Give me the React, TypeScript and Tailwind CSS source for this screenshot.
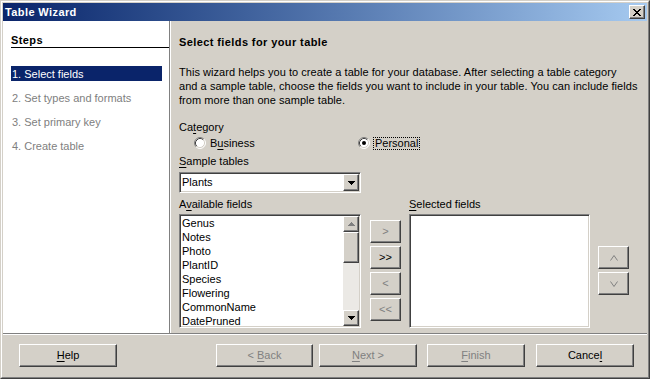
import React from 'react';

const raised =
  'bg-[#d4d0c8] border border-t-white border-l-white border-r-[#404040] border-b-[#404040] shadow-[inset_-1px_-1px_#808080]';
const sunken =
  'border border-t-[#808080] border-l-[#808080] border-r-white border-b-white shadow-[inset_1px_1px_#404040,inset_-1px_-1px_#d4d0c8]';

function U({ children }: { children: React.ReactNode }) {
  return <span className="underline underline-offset-[2px]">{children}</span>;
}

function Radio({ checked }: { checked?: boolean }) {
  return (
    <svg width="12" height="12" viewBox="0 0 12 12" className="shrink-0">
      <circle cx="6" cy="6" r="5" fill="#fff" />
      <path d="M2.11 9.89 A5.5 5.5 0 0 1 9.89 2.11" fill="none" stroke="#808080" />
      <path d="M2.82 9.18 A4.5 4.5 0 0 1 9.18 2.82" fill="none" stroke="#404040" />
      <path d="M9.89 2.11 A5.5 5.5 0 0 1 2.11 9.89" fill="none" stroke="#fff" />
      <path d="M9.18 2.82 A4.5 4.5 0 0 1 2.82 9.18" fill="none" stroke="#d4d0c8" />
      {checked && <circle cx="6" cy="6" r="2" fill="#000" />}
    </svg>
  );
}

function Tri({ up, color = '#000' }: { up?: boolean; color?: string }) {
  return (
    <svg width="7" height="4" viewBox="0 0 7 4" shapeRendering="crispEdges">
      {up ? (
        <>
          <rect x="3" y="0" width="1" height="1" fill={color} />
          <rect x="2" y="1" width="3" height="1" fill={color} />
          <rect x="1" y="2" width="5" height="1" fill={color} />
          <rect x="0" y="3" width="7" height="1" fill={color} />
        </>
      ) : (
        <>
          <rect x="0" y="0" width="7" height="1" fill={color} />
          <rect x="1" y="1" width="5" height="1" fill={color} />
          <rect x="2" y="2" width="3" height="1" fill={color} />
          <rect x="3" y="3" width="1" height="1" fill={color} />
        </>
      )}
    </svg>
  );
}

function Chevron({ up }: { up?: boolean }) {
  return (
    <svg width="8" height="6" viewBox="0 0 8 6">
      <polyline
        points={up ? '0.5,5.5 4,0.5 7.5,5.5' : '0.5,0.5 4,5.5 7.5,0.5'}
        fill="none"
        stroke="#808080"
        strokeWidth="1"
      />
    </svg>
  );
}

const fields = ['Genus', 'Notes', 'Photo', 'PlantID', 'Species', 'Flowering', 'CommonName', 'DatePruned'];
const steps = ['1. Select fields', '2. Set types and formats', '3. Set primary key', '4. Create table'];

function SmallBtn({ children, disabled }: { children: React.ReactNode; disabled?: boolean }) {
  return (
    <div
      className={`${raised} w-[31px] h-[23px] flex items-center justify-center leading-none ${
        disabled ? 'text-[#808080]' : 'text-black'
      }`}
    >
      {children}
    </div>
  );
}

function FooterBtn({
  children,
  disabled,
  className = '',
}: {
  children: React.ReactNode;
  disabled?: boolean;
  className?: string;
}) {
  return (
    <div
      className={`${raised} h-[23px] flex items-center justify-center ${
        disabled ? 'text-[#808080]' : 'text-black'
      } ${className}`}
    >
      <span className="whitespace-pre">{children}</span>
    </div>
  );
}

export default function App() {
  return (
    <div className="w-[650px] h-[379px] bg-[#d4d0c8] border border-t-[#d4d0c8] border-l-[#d4d0c8] border-r-[#404040] border-b-[#404040] font-['Liberation_Sans',Arial,sans-serif] text-[11px] text-black overflow-hidden">
      <div className="h-full border border-t-white border-l-white border-r-[#808080] border-b-[#808080] p-[1px] flex flex-col">
        {/* title bar */}
        <div className="h-[18px] shrink-0 flex items-center bg-gradient-to-r from-[#0a246a] to-[#a6caf0] pl-[2px] pr-[2px]">
          <span className="text-white font-bold leading-[18px] tracking-[0.4px]">Table Wizard</span>
          <div className={`${raised} ml-auto w-[16px] h-[14px] flex items-center justify-center`}>
            <svg width="8" height="7" viewBox="0 0 8 7" shapeRendering="crispEdges">
              <path d="M0 0h2v1h-2zM6 0h2v1h-2zM1 1h2v1h-2zM5 1h2v1h-2zM2 2h4v1h-4zM3 3h2v1h-2zM2 4h4v1h-4zM1 5h2v1h-2zM5 5h2v1h-2zM0 6h2v1h-2zM6 6h2v1h-2z" fill="#000" />
            </svg>
          </div>
        </div>

        {/* body */}
        <div className="h-[312px] shrink-0 flex">
          <div className="w-[166px] bg-white pl-[8px]">
            <div className="mt-[13px] h-[14px] leading-[13px] border-b border-black font-bold tracking-[0.4px]">
              Steps
            </div>
            <div className="mt-[18px] flex flex-col gap-[9px]">
              {steps.map((s, i) => (
                <div
                  key={s}
                  className={`w-[151px] h-[15px] pt-[1px] pl-[1px] leading-[14px] whitespace-nowrap ${
                    i === 0 ? 'bg-[#0a246a] text-white' : 'text-[#808080]'
                  }`}
                >
                  {s}
                </div>
              ))}
            </div>
          </div>
          <div className="w-[1px] bg-[#808080]" />
          <div className="w-[1px] bg-white" />

          <div className="flex-1 pl-[8px] flex flex-col">
            <div className="mt-[14px] leading-[14px] font-bold tracking-[0.4px]">Select fields for your table</div>
            <div className="mt-[16px] leading-[14px] whitespace-nowrap tracking-[0.05px]">
              This wizard helps you to create a table for your database. After selecting a table category
              <br />
              and a sample table, choose the fields you want to include in your table. You can include fields
              <br />
              from more than one sample table.
            </div>

            <div className="mt-[13px] leading-[14px]">
              Ca<U>t</U>egory
            </div>
            <div className="mt-[2px] h-[14px] flex items-center leading-[14px]">
              <div className="ml-[15px] w-[164px] flex items-center">
                <Radio />
                <span className="ml-[4px]">
                  B<U>u</U>siness
                </span>
              </div>
              <Radio checked />
              <span className="ml-[3px] px-[1px] border border-dotted border-black leading-[11px] h-[13px]">
                Personal
              </span>
            </div>

            <div className="mt-[4px] leading-[14px]">
              <U>S</U>ample tables
            </div>
            <div className={`${sunken} mt-[4px] w-[182px] h-[21px] bg-white p-[1px] flex`}>
              <div className="flex-1 pl-[1px] leading-[17px]">Plants</div>
              <div className={`${raised} w-[16px] h-[17px] flex items-center justify-center`}>
                <Tri />
              </div>
            </div>

            <div className="mt-[4px] flex">
              <div className="w-[182px]">
                <div className="leading-[14px]">
                  A<U>v</U>ailable fields
                </div>
                <div className={`${sunken} mt-[3px] h-[114px] bg-white p-[1px] flex`}>
                  <div className="flex-1 pl-[1px] overflow-hidden">
                    {fields.map((f) => (
                      <div key={f} className="h-[14px] leading-[14px]">
                        {f}
                      </div>
                    ))}
                  </div>
                  <div className="w-[16px] flex flex-col bg-[#ebe9e5]">
                    <div className={`${raised} h-[16px] flex items-center justify-center`}>
                      <Tri up color="#808080" />
                    </div>
                    <div className={`${raised} h-[31px]`} />
                    <div className="flex-1" />
                    <div className={`${raised} h-[16px] flex items-center justify-center`}>
                      <Tri />
                    </div>
                  </div>
                </div>
              </div>

              <div className="ml-[9px] w-[31px] pt-[23px] flex flex-col gap-[3px]">
                <SmallBtn disabled>&gt;</SmallBtn>
                <SmallBtn>&gt;&gt;</SmallBtn>
                <SmallBtn disabled>&lt;</SmallBtn>
                <SmallBtn disabled>&lt;&lt;</SmallBtn>
              </div>

              <div className="ml-[8px] w-[181px]">
                <div className="leading-[14px]">
                  <U>S</U>elected fields
                </div>
                <div className={`${sunken} mt-[3px] h-[114px] bg-white`} />
              </div>

              <div className="ml-[8px] w-[31px] pt-[49px] flex flex-col gap-[3px]">
                <SmallBtn disabled>
                  <Chevron up />
                </SmallBtn>
                <SmallBtn disabled>
                  <Chevron />
                </SmallBtn>
              </div>
            </div>
          </div>
        </div>

        <div className="h-[1px] shrink-0 bg-[#808080]" />
        <div className="h-[1px] shrink-0 bg-white" />

        {/* footer */}
        <div className="flex-1 pt-[9px] pl-[16px] flex items-start">
          <FooterBtn className="w-[98px]">
            <U>H</U>elp
          </FooterBtn>
          <FooterBtn disabled className="ml-[99px] w-[97px]">
            {'< '}
            <U>B</U>ack
          </FooterBtn>
          <FooterBtn disabled className="ml-[6px] w-[98px]">
            <U>N</U>
            {'ext >'}
          </FooterBtn>
          <FooterBtn disabled className="ml-[10px] w-[98px]">
            <U>F</U>inish
          </FooterBtn>
          <FooterBtn className="ml-[11px] w-[98px]">
            Cance<U>l</U>
          </FooterBtn>
        </div>
      </div>
    </div>
  );
}
